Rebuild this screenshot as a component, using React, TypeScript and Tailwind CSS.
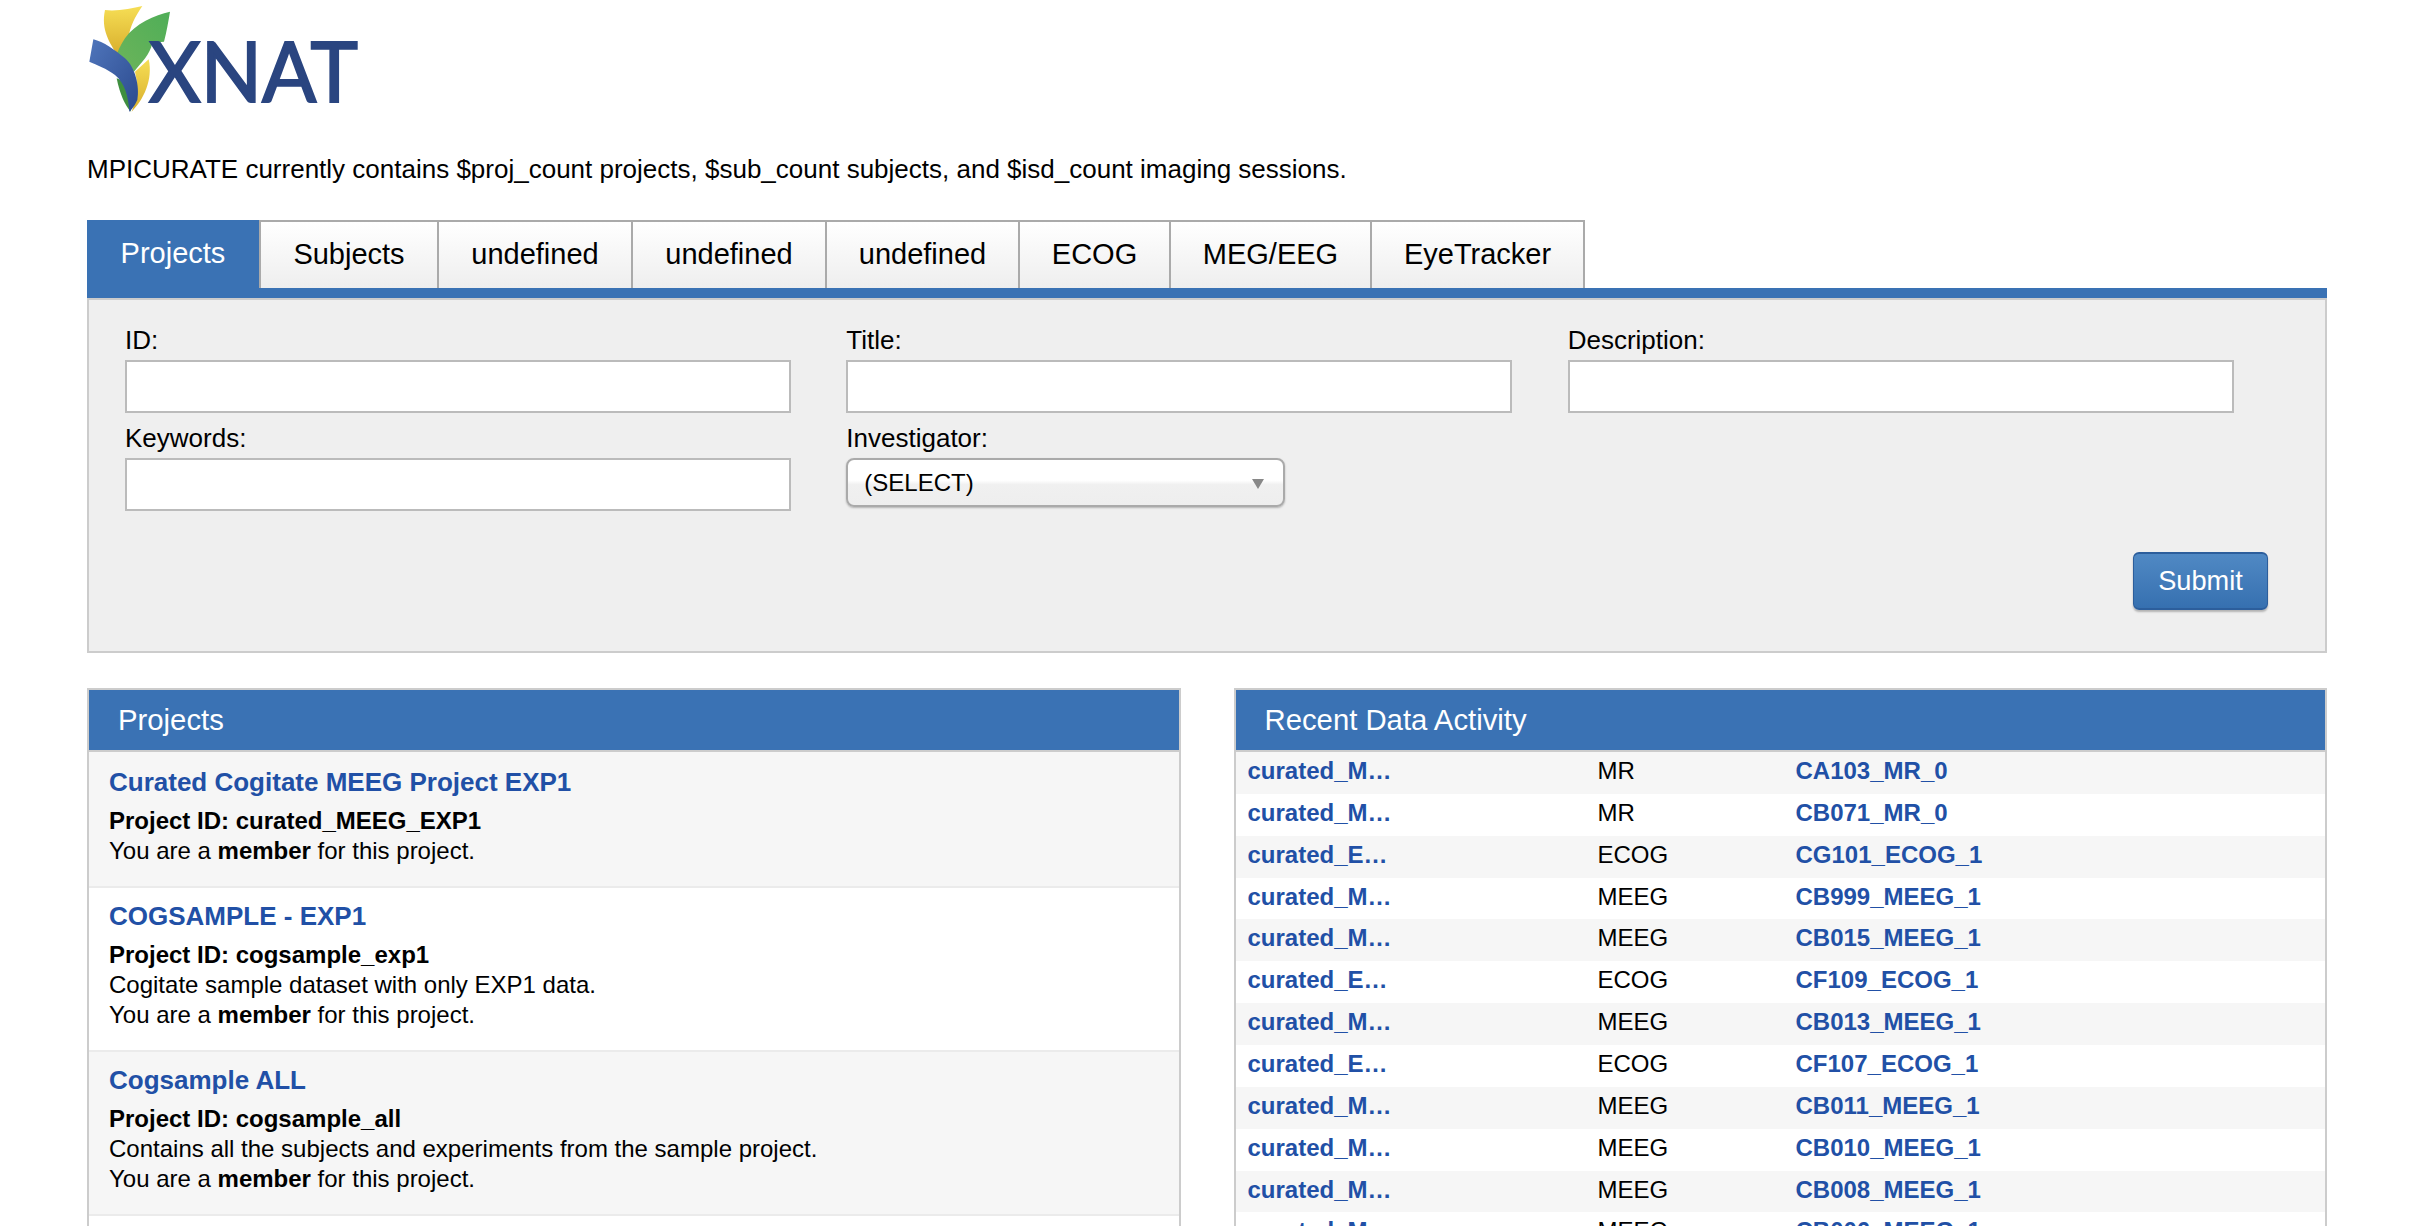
import React from "react";

const font = { fontFamily: '"Liberation Sans", Arial, sans-serif' };

function Logo() {
  return (
    <svg viewBox="0 0 960 390" className="block w-[320px] h-[130px] ml-[-27px] blur-[0.6px]">
      <defs>
        <linearGradient id="yl" x1="0" y1="0" x2="0" y2="1">
          <stop offset="0" stopColor="#f6de55" />
          <stop offset="1" stopColor="#d8ae2c" />
        </linearGradient>
        <linearGradient id="gr" x1="1" y1="0" x2="0" y2="1">
          <stop offset="0" stopColor="#4fae58" />
          <stop offset="1" stopColor="#6cb45a" />
        </linearGradient>
        <linearGradient id="bl" x1="0" y1="0" x2="1" y2="1">
          <stop offset="0" stopColor="#4f75bb" />
          <stop offset="1" stopColor="#2b4a8e" />
        </linearGradient>
      </defs>
      <path d="M135 30C170 35 215 25 247 18C225 50 210 80 205 115C195 135 185 150 172 165C150 130 122 90 135 30Z" fill="url(#yl)" />
      <path d="M266 178C280 240 250 300 215 335C228 300 238 270 225 215Z" fill="url(#yl)" />
      <path d="M170 235C180 285 195 315 212 335C214 300 205 270 195 245Z" fill="#3f8f3f" />
      <path d="M330 35C285 45 225 70 195 115C185 130 175 150 172 160C180 175 205 195 222 215C245 185 270 165 277 128L312 125C320 95 325 65 330 35Z" fill="url(#gr)" />
      <path d="M100 118C130 125 165 150 195 175C225 200 240 260 232 300C225 315 215 330 208 335C205 290 195 250 165 225C140 205 110 195 88 185Z" fill="url(#bl)" />
      <text x="266" y="305" fontSize="250" fontWeight="400" stroke="#2a4580" strokeWidth="6" fill="#2a4580" textLength="628" lengthAdjust="spacingAndGlyphs" style={{ fontFamily: "Lato, sans-serif" }}>XNAT</text>
    </svg>
  );
}

const tabs = [
  ["Subjects", "w-[178px]"],
  ["undefined", "w-[194px]"],
  ["undefined", "w-[194px]"],
  ["undefined", "w-[193px]"],
  ["ECOG", "w-[151px]"],
  ["MEG/EEG", "w-[201px]"],
  ["EyeTracker", "w-[213px]"],
];

function Field({ label }: { label: string }) {
  return (
    <div>
      <label className="block text-[26px] leading-[33px] pb-[3px] text-black">{label}</label>
      <input className="block w-[666px] h-[53px] bg-white border-2 border-[#bbbbbb] outline-none" />
    </div>
  );
}

const projects = [
  { t: "Curated Cogitate MEEG Project EXP1", id: "curated_MEEG_EXP1", d: "", first: true },
  { t: "COGSAMPLE - EXP1", id: "cogsample_exp1", d: "Cogitate sample dataset with only EXP1 data." },
  { t: "Cogsample ALL", id: "cogsample_all", d: "Contains all the subjects and experiments from the sample project." },
];

const activity = [
  ["curated_M…", "MR", "CA103_MR_0"],
  ["curated_M…", "MR", "CB071_MR_0"],
  ["curated_E…", "ECOG", "CG101_ECOG_1"],
  ["curated_M…", "MEEG", "CB999_MEEG_1"],
  ["curated_M…", "MEEG", "CB015_MEEG_1"],
  ["curated_E…", "ECOG", "CF109_ECOG_1"],
  ["curated_M…", "MEEG", "CB013_MEEG_1"],
  ["curated_E…", "ECOG", "CF107_ECOG_1"],
  ["curated_M…", "MEEG", "CB011_MEEG_1"],
  ["curated_M…", "MEEG", "CB010_MEEG_1"],
  ["curated_M…", "MEEG", "CB008_MEEG_1"],
  ["curated_M…", "MEEG", "CB006_MEEG_1"],
];

function PanelHeader({ children }: { children: React.ReactNode }) {
  return (
    <div className="h-[62px] bg-[#3a72b4] border-b-2 border-[#cccccc] pl-[29px] flex items-center text-[29.3px] text-white">
      {children}
    </div>
  );
}

export default function App() {
  return (
    <div style={font} className="h-[1226px] overflow-hidden bg-white px-[87px] text-black">
      <Logo />
      <p className="mt-[21px] text-[26px] leading-[36px]">
        MPICURATE currently contains $proj_count projects, $sub_count subjects, and $isd_count imaging sessions.
      </p>

      <div className="mt-[33px] flex h-[68px]">
        <div className="w-[172px] bg-[#3a72b4] text-white text-[29px] flex items-center justify-center">Projects</div>
        <div className="flex border-t-2 border-r-2 border-[#aaaaaa]">
          {tabs.map(([name, w], i) => (
            <div
              key={i}
              className={`${w} border-l-2 border-[#aaaaaa] bg-gradient-to-b from-[#ffffff] to-[#eeeeee] text-[29px] flex items-center justify-center`}
            >
              {name}
            </div>
          ))}
        </div>
      </div>

      <div className="h-[10px] bg-[#3a72b4]" />
      <div className="bg-[#efefef] border-2 border-[#cccccc] h-[355px] pt-[24px]">
        <div className="grid grid-cols-3 gap-y-[9px] px-9">
          <Field label="ID:" />
          <Field label="Title:" />
          <Field label="Description:" />
          <Field label="Keywords:" />
          <div>
            <label className="block text-[26px] leading-[33px] pb-[3px]">Investigator:</label>
            <div className="relative w-[439px]">
              <select className="block w-full h-[49px] appearance-none rounded-[8px] border-2 border-[#aaaaaa] bg-[linear-gradient(#ffffff_0%,#ffffff_45%,#f0f0f0_55%,#eeeeee_100%)] pl-[16px] text-[24px] text-black shadow-[0_1px_2px_rgba(0,0,0,0.25)] outline-none">
                <option>(SELECT)</option>
              </select>
              <svg viewBox="0 0 12 10" className="absolute right-[21px] top-[21px] w-[12px] h-[10px]">
                <path d="M0 0H12L6 10Z" fill="#888888" />
              </svg>
            </div>
          </div>
        </div>
        <div className="flex justify-end pr-[57px] mt-[41px]">
          <button className="w-[135px] h-[58px] rounded-[6px] border border-[#2c5e9c] border-t-2 border-b-2 bg-gradient-to-b from-[#5089c4] to-[#3670b0] text-white text-[27.2px] shadow-[0_2px_2px_rgba(0,0,0,0.25)]">
            Submit
          </button>
        </div>
      </div>

      <div className="grid grid-cols-2 gap-x-[53px] mt-[35px]">
        <div className="border-2 border-[#cccccc]">
          <PanelHeader>Projects</PanelHeader>
          {projects.map((p, i) => (
            <div
              key={i}
              className={`${i % 2 === 0 ? "bg-[#f6f6f6]" : "bg-white"} border-b-2 border-[#ebebeb] px-[20px] ${p.first ? "pt-[13px]" : "pt-[11px]"} pb-[20px]`}
            >
              <a className="block text-[26px] leading-[34px] font-bold text-[#2150a6]">{p.t}</a>
              <div className="mt-[7px] text-[24px] leading-[30px]">
                <div className="font-bold">Project ID: {p.id}</div>
                {p.d && <div>{p.d}</div>}
                <div>
                  You are a <b>member</b> for this project.
                </div>
              </div>
            </div>
          ))}
          <div className="h-[60px] bg-white" />
        </div>

        <div className="border-2 border-[#cccccc]">
          <PanelHeader>Recent Data Activity</PanelHeader>
          <div className="grid grid-cols-[362px_198px_1fr] text-[24px]">
            {activity.map(([a, b, c], i) => {
              const bg = i % 2 === 0 ? "bg-[#f6f6f6]" : "bg-white";
              return (
                <React.Fragment key={i}>
                  <div className={`${bg} h-[41.87px] leading-[37px] pl-[12px] font-bold text-[#2150a6]`}>{a}</div>
                  <div className={`${bg} h-[41.87px] leading-[37px]`}>{b}</div>
                  <div className={`${bg} h-[41.87px] leading-[37px] font-bold text-[#2150a6]`}>{c}</div>
                </React.Fragment>
              );
            })}
          </div>
        </div>
      </div>
    </div>
  );
}
